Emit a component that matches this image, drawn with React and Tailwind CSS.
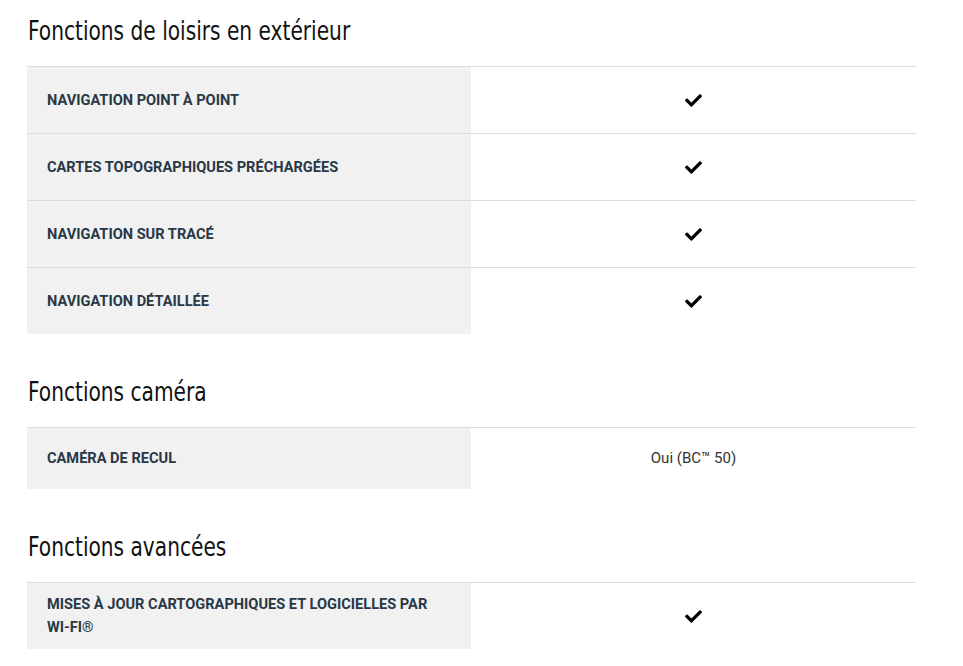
import React from 'react';
import { FaCheck } from 'react-icons/fa';

const sections = [
    {
        title: 'Fonctions de loisirs en extérieur',
        rows: [
            { label: 'Navigation point à point', check: true },
            { label: 'Cartes topographiques préchargées', check: true },
            { label: 'Navigation sur tracé', check: true },
            { label: 'Navigation détaillée', check: true },
        ],
    },
    {
        title: 'Fonctions caméra',
        rows: [{ label: 'Caméra de recul', value: 'Oui (BC™ 50)' }],
    },
    {
        title: 'Fonctions avancées',
        rows: [
            {
                label: (
                    <>
                        Mises à jour cartographiques et logicielles par <span className="whitespace-nowrap">Wi-Fi®</span>
                    </>
                ),
                key: 'wifi',
                check: true,
            },
        ],
    },
];

const SpecRow = ({ row }) => (
    <div className="flex border-t border-[#dcdcdc]">
        <div
            className={`w-[444px] shrink-0 bg-[#f1f1f1] pl-5 pr-4 flex items-center uppercase font-bold text-[14.6px] leading-[23px] text-[#293847] ${
                row.check ? 'h-[66px]' : 'h-[61px]'
            }`}
        >
            <span>{row.label}</span>
        </div>
        <div className="flex-1 flex items-center justify-center text-[15px] text-[#333]">
            {row.check ? <FaCheck className="text-black w-[17px] h-[17px]" /> : row.value}
        </div>
    </div>
);

export default function App() {
    return (
        <div className="bg-white min-h-[666px] px-[27px] font-['Roboto',sans-serif]">
            <div className="w-[889px]">
                {sections.map((section, i) => (
                    <section key={section.title} className={i === 0 ? 'pt-[14px]' : 'pt-[41px]'}>
                        <h2 className="font-['DejaVu_Sans_Condensed','DejaVu_Sans',sans-serif] text-[27px] leading-[34px] text-[#111] mb-[18px] pl-px">
                            <span className="inline-block origin-left scale-x-[0.83] whitespace-nowrap">{section.title}</span>
                        </h2>
                        <div>
                            {section.rows.map(row => (
                                <SpecRow key={row.key || row.label} row={row} />
                            ))}
                        </div>
                    </section>
                ))}
            </div>
        </div>
    );
}
